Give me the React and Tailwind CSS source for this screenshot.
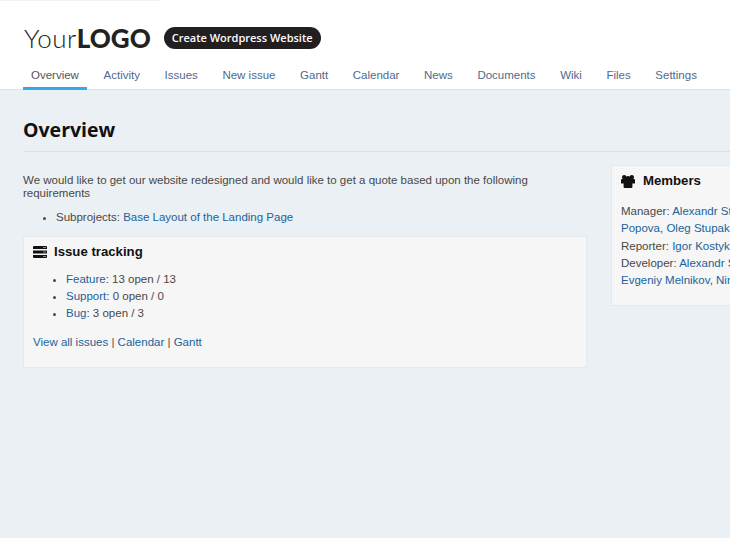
import React from "react";

const navItems = ["Overview", "Activity", "Issues", "New issue", "Gantt", "Calendar", "News", "Documents", "Wiki", "Files", "Settings"];

const link = "text-[#1b629a]";

const IssueIcon = () => (
  <svg className="w-[14px] h-[12px] text-[#111]" viewBox="0 0 14 12" fill="currentColor" aria-hidden="true">
    <path d="M1 0h12a1 1 0 0 1 1 1v2H0V1a1 1 0 0 1 1-1Z" />
    <path d="M0 4.5h14v3H0z" />
    <path d="M0 9h14v2a1 1 0 0 1-1 1H1a1 1 0 0 1-1-1Z" />
    <path d="M10 1h3v1h-3zM10 5.5h3v1h-3zM10 10h3v1h-3z" fill="#888" />
  </svg>
);

const MembersIcon = () => (
  <svg className="w-[14px] h-[13px] text-[#111]" viewBox="0 0 14 13" fill="currentColor" aria-hidden="true">
    <circle cx="3.2" cy="2.2" r="2.2" />
    <circle cx="10.8" cy="2.2" r="2.2" />
    <circle cx="7" cy="3.4" r="2.4" />
    <path d="M1 4h12a1 1 0 0 1 1 1v3.6h-2.6V12a1 1 0 0 1-1 1H3.6a1 1 0 0 1-1-1V8.6H0V5a1 1 0 0 1 1-1Z" />
  </svg>
);

export default function App() {
  return (
    <div className="w-[730px] h-[538px] overflow-hidden bg-[#ebf0f4] font-['Liberation_Sans',Arial,sans-serif] text-[11.5px] text-[#484848]">
      <div className="h-[90px] bg-white border-b border-[#dde2e6]">
        <div className="h-px w-[160px] bg-[#f2f2f2]" />
        <div className="flex items-center gap-3 pl-6 pt-[25px] h-[49px]">
          <div className="font-['Lato',sans-serif] text-[26px] leading-[24px] text-[#222]">
            <span className="font-light tracking-[0.5px]">Your</span>
            <span className="font-black">LOGO</span>
          </div>
          <span className="flex items-center h-[22px] px-2 ml-px rounded-full bg-[#231f20] text-white font-['Open_Sans',sans-serif] font-semibold text-[11px]">
            Create Wordpress Website
          </span>
        </div>
        <nav className="flex gap-[8.6px] pl-[23px] mt-[14px]">
          {navItems.map((item, i) => (
            <a
              key={item}
              className={
                "px-2 h-[26px] pt-[3px] leading-[16px] " +
                (i === 0 ? "border-b-[3px] border-[#35a7ef] text-[#555]" : "text-[#4f6a8c]")
              }
            >
              {item}
            </a>
          ))}
        </nav>
      </div>

      <div className="pl-[23px]">
        <h2 className="h-[62px] pt-[25px] border-b border-[#dce1e5] font-['Open_Sans',sans-serif] font-bold text-[19.5px] leading-[30px] text-[#111]">
          Overview
        </h2>
        <div className="flex gap-6 mt-[13px]">
          <div className="w-[564px] shrink-0 pt-[9px]">
            <p className="leading-[13px] w-[540px]">
              We would like to get our website redesigned and would like to get a quote based upon the following requirements
            </p>
            <ul className="list-disc pl-[33px] mt-[9px] leading-[17px]">
              <li>
                Subprojects: <a className={link}>Base Layout of the Landing Page</a>
              </li>
            </ul>
            <div className="mt-[10px] h-[132px] bg-[#f6f6f6] border border-[#e6e8ea] px-[9px]">
              <h3 className="flex items-center gap-[7px] mt-[7px] font-bold text-[13.2px] leading-[16px] text-[#111]">
                <IssueIcon />
                Issue tracking
              </h3>
              <ul className="list-disc pl-[33px] mt-[11px] leading-[17px]">
                <li><a className={link}>Feature</a>: 13 open / 13</li>
                <li><a className={link}>Support</a>: 0 open / 0</li>
                <li><a className={link}>Bug</a>: 3 open / 3</li>
              </ul>
              <p className="mt-3 leading-[17px]">
                <a className={link}>View all issues</a> | <a className={link}>Calendar</a> | <a className={link}>Gantt</a>
              </p>
            </div>
          </div>
          <div className="w-[300px] shrink-0 h-[141px] bg-[#f6f6f6] border border-[#e6e8ea] px-[9px]">
            <h3 className="flex items-center gap-2 mt-[7px] font-bold text-[13.2px] leading-[16px] text-[#111]">
              <MembersIcon />
              Members
            </h3>
            <div className="mt-[14px] leading-[17.25px] whitespace-nowrap">
              <div>Manager: <a className={link}>Alexandr St</a></div>
              <div><a className={link}>Popova</a>, <a className={link}>Oleg Stupak</a></div>
              <div>Reporter: <a className={link}>Igor Kostyk</a></div>
              <div>Developer: <a className={link}>Alexandr S</a></div>
              <div><a className={link}>Evgeniy Melnikov</a>, <a className={link}>Nin</a></div>
            </div>
          </div>
        </div>
      </div>
    </div>
  );
}
